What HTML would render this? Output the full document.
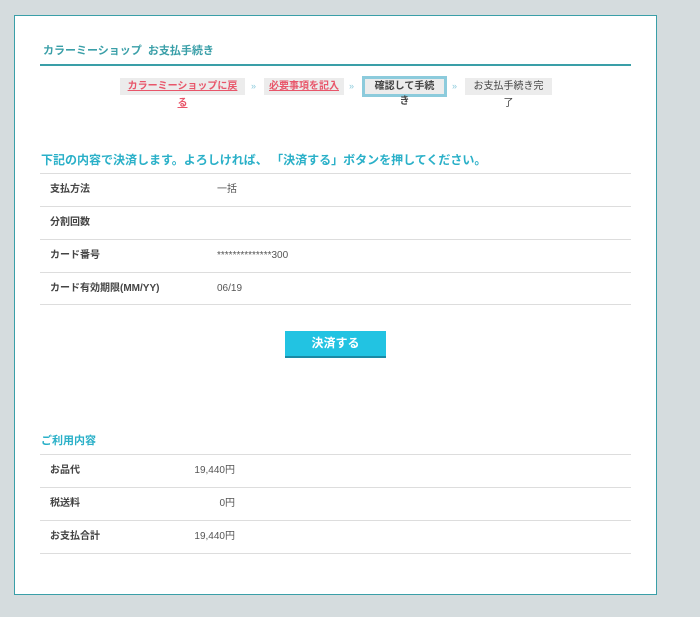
<!DOCTYPE html>
<html><head><meta charset="utf-8"><style>
*{margin:0;padding:0;box-sizing:border-box}
body{width:700px;height:617px;background:#d5dcde;font-family:"Liberation Sans","Noto Sans CJK JP",sans-serif;position:relative;overflow:hidden;color:#444}
.box{position:absolute;left:14px;top:15px;width:643px;height:580px;background:#fff;border:1px solid #3a9fa8}
.a{position:absolute;white-space:nowrap;line-height:14px}
.ttl{left:43px;top:44px;font-size:11px;font-weight:bold;color:#3a9fa8}
.hl{position:absolute;left:40px;width:591px;height:2px;background:#3a9fa8;top:64px}
.bc{position:absolute;top:78px;height:17px;font-size:10px;line-height:17px;padding:0 5px;background:#ececec;text-align:center}
.lnk{color:#e8566a;text-decoration:underline;font-weight:bold}
.cur{border:3px solid #8ccbdc;top:76px;height:21px;line-height:15px;font-weight:bold;color:#444}
.sep{position:absolute;top:78px;font-size:9px;line-height:17px;color:#8ccbdc}
.h2{font-size:12px;font-weight:bold;color:#2ab0c8;line-height:16px}
.ln{position:absolute;left:40px;width:591px;height:1px;background:#ddd}
.lb{font-size:10px;font-weight:bold;color:#444;left:50px}
.v{font-size:10px;color:#555}
.btn{position:absolute;left:285px;top:331px;width:101px;height:27px;background:#22c3e2;border-bottom:2px solid #1a8aa5;color:#fff;font-weight:bold;font-size:12px;text-align:center;line-height:25px}
</style></head><body>
<div class="box"></div>
<div class="a ttl">カラーミーショップ&nbsp;&nbsp;お支払手続き</div>
<div class="hl"></div>
<div class="bc" style="left:120px;width:125px"><span class="lnk">カラーミーショップに戻る</span></div>
<div class="sep" style="left:251px">»</div>
<div class="bc" style="left:264px;width:80px"><span class="lnk">必要事項を記入</span></div>
<div class="sep" style="left:349px">»</div>
<div class="bc cur" style="left:362px;width:85px">確認して手続き</div>
<div class="sep" style="left:452px">»</div>
<div class="bc" style="left:465px;width:87px;color:#444">お支払手続き完了</div>

<div class="a h2" style="left:41px;top:152px">下記の内容で決済します。よろしければ、 「決済する」ボタンを押してください。</div>
<div class="ln" style="top:173px"></div>
<div class="a lb" style="top:183px">支払方法</div><div class="a v" style="left:217px;top:183px">一括</div>
<div class="ln" style="top:206px"></div>
<div class="a lb" style="top:216px">分割回数</div>
<div class="ln" style="top:239px"></div>
<div class="a lb" style="top:249px">カード番号</div><div class="a v" style="left:217px;top:249px">**************300</div>
<div class="ln" style="top:272px"></div>
<div class="a lb" style="top:282px">カード有効期限(MM/YY)</div><div class="a v" style="left:217px;top:282px">06/19</div>
<div class="ln" style="top:304px"></div>
<div class="btn">決済する</div>

<div class="a h2" style="left:41px;top:433px;font-size:11px">ご利用内容</div>
<div class="ln" style="top:454px"></div>
<div class="a lb" style="top:464px">お品代</div><div class="a v" style="right:465px;top:464px">19,440円</div>
<div class="ln" style="top:487px"></div>
<div class="a lb" style="top:497px">税送料</div><div class="a v" style="right:465px;top:497px">0円</div>
<div class="ln" style="top:520px"></div>
<div class="a lb" style="top:530px">お支払合計</div><div class="a v" style="right:465px;top:530px">19,440円</div>
<div class="ln" style="top:553px"></div>
</body></html>
